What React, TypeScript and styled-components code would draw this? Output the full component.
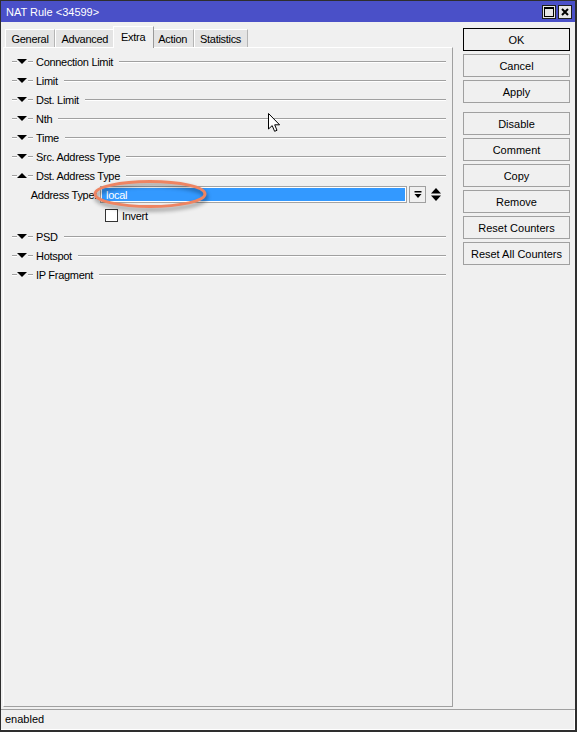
import React from "react";
import styled, { createGlobalStyle } from "styled-components";

const GlobalStyle = createGlobalStyle`
  html, body {
    margin: 0;
    padding: 0;
    background: #f0f0f0;
  }
  body {
    font-family: "Liberation Sans", Arial, sans-serif;
    font-size: 11px;
    color: #000;
  }
`;

const Window = styled.div`
  position: relative;
  width: 577px;
  height: 732px;
  box-sizing: border-box;
  border: 1px solid #2e2e2e;
  border-right-width: 2px;
  border-bottom-width: 2px;
  background: #f0f0f0;
  display: flex;
  flex-direction: column;
  overflow: hidden;
`;

const TitleBar = styled.div`
  height: 21px;
  flex: none;
  background: #4a50c8;
  color: #fff;
  display: flex;
  align-items: center;
  justify-content: space-between;
  padding: 0 3px 0 5px;
  font-size: 11px;
`;

const WinButtons = styled.div`
  display: flex;
  gap: 2px;
`;

const WinButton = styled.div`
  width: 14px;
  height: 14px;
  box-sizing: border-box;
  border: 1px solid #1e1e1e;
  background: #e6e6e6;
  display: flex;
  align-items: center;
  justify-content: center;
`;

const Body = styled.div`
  flex: 1;
  min-height: 0;
  display: flex;
`;

const LeftColumn = styled.div`
  width: 450px;
  margin-left: 2px;
  margin-bottom: 2px;
  display: flex;
  flex-direction: column;
`;

const TabStrip = styled.div`
  height: 25px;
  flex: none;
  display: flex;
  align-items: flex-end;
  padding-left: 2px;
  letter-spacing: -0.3px;
`;

const Tab = styled.div<{ $active?: boolean }>`
  box-sizing: border-box;
  height: ${(p) => (p.$active ? "22px" : "18px")};
  margin: ${(p) => (p.$active ? "0 -2px -1px -2px" : "0")};
  padding: ${(p) => (p.$active ? "0 7.5px 2px" : "0 5.5px")};
  position: relative;
  z-index: ${(p) => (p.$active ? 2 : 1)};
  background: ${(p) => (p.$active ? "#f0f0f0" : "#e4e4e4")};
  border-top: 1px solid #fff;
  border-left: 1px solid #fff;
  border-right: 1px solid ${(p) => (p.$active ? "#9a9a9a" : "#b4b4b4")};
  display: flex;
  align-items: center;
  white-space: nowrap;
`;

const Panel = styled.div`
  flex: 1;
  box-sizing: border-box;
  border-top: 1px solid #fff;
  border-left: 1px solid #fff;
  border-right: 1px solid #a0a0a0;
  border-bottom: 1px solid #a0a0a0;
  padding: 4px 6px 0 7px;
  letter-spacing: -0.3px;
`;

const SectionRow = styled.div`
  height: 19px;
  display: flex;
  align-items: center;
`;

const Dash = styled.div<{ $w: number }>`
  width: ${(p) => p.$w}px;
  height: 0;
  flex: none;
  border-top: 1px solid #a0a0a0;
  border-bottom: 1px solid #fff;
  margin-left: 1px;
`;

const Rule = styled.div`
  flex: 1;
  height: 0;
  border-top: 1px solid #a0a0a0;
  border-bottom: 1px solid #fff;
  margin-left: 6px;
`;

const SectionTitle = styled.span`
  margin-left: 3px;
  white-space: nowrap;
`;

const ArrowSvg = styled.svg`
  flex: none;
`;

const FieldRow = styled.div`
  height: 19px;
  display: flex;
  align-items: center;
`;

const FieldLabel = styled.span`
  width: 86px;
  text-align: right;
  padding-right: 3px;
  white-space: nowrap;
  flex: none;
`;

const SelectBox = styled.div`
  width: 307px;
  height: 17px;
  box-sizing: border-box;
  border: 1px solid #a3a3a3;
  padding: 1px;
  background: #fff;
  flex: none;
`;

const SelectValue = styled.div`
  height: 100%;
  background: #3399ff;
  color: #fff;
  display: flex;
  align-items: center;
  padding-left: 4px;
`;

const DropButton = styled.div`
  width: 17px;
  height: 17px;
  box-sizing: border-box;
  margin-left: 2px;
  border: 1px solid #a0a0a0;
  background: #f0f0f0;
  display: flex;
  align-items: center;
  justify-content: center;
  flex: none;
`;

const Spinner = styled.svg`
  margin-left: 5px;
  flex: none;
`;

const CheckRow = styled.div`
  height: 23px;
  display: flex;
  align-items: center;
  padding-left: 94px;
`;

const CheckBox = styled.div`
  width: 13px;
  height: 13px;
  box-sizing: border-box;
  border: 1px solid #333;
  background: #fff;
  margin-right: 4px;
`;

const RightColumn = styled.div`
  flex: 1;
  padding: 6px 0 0 10px;
  display: flex;
  flex-direction: column;
  gap: 3px;
`;

const Button = styled.div<{ $default?: boolean; $spaced?: boolean }>`
  width: 107px;
  height: 23px;
  box-sizing: border-box;
  border: 1px solid ${(p) => (p.$default ? "#000" : "#a0a0a0")};
  background: #f0f0f0;
  display: flex;
  align-items: center;
  justify-content: center;
  margin-top: ${(p) => (p.$spaced ? "6px" : "0")};
`;

const StatusBar = styled.div`
  height: 21px;
  flex: none;
  box-sizing: border-box;
  border-top: 1px solid #a0a0a0;
  box-shadow: inset -1px -1px 0 #fff;
  padding: 0 0 2px 4px;
  display: flex;
  align-items: center;
`;

const Highlight = styled.svg`
  position: absolute;
  left: 88px;
  top: 173px;
  overflow: visible;
  filter: drop-shadow(1px 3px 2px rgba(0, 0, 0, 0.45));
  pointer-events: none;
`;

const Cursor = styled.svg`
  position: absolute;
  left: 267px;
  top: 112px;
  pointer-events: none;
`;

const tabs = ["General", "Advanced", "Extra", "Action", "Statistics"];
const before = [
  "Connection Limit",
  "Limit",
  "Dst. Limit",
  "Nth",
  "Time",
  "Src. Address Type",
];
const after = ["PSD", "Hotspot", "IP Fragment"];
const buttons = [
  "OK",
  "Cancel",
  "Apply",
  "Disable",
  "Comment",
  "Copy",
  "Remove",
  "Reset Counters",
  "Reset All Counters",
];

const Arrow: React.FC<{ open?: boolean }> = ({ open }) => (
  <ArrowSvg width="10" height="5" viewBox="0 0 10 5">
    <polygon points={open ? "0,5 10,5 5,0" : "0,0 10,0 5,5"} fill="#000" />
  </ArrowSvg>
);

const Section: React.FC<{ title: string; open?: boolean }> = ({
  title,
  open,
}) => (
  <SectionRow>
    <Dash $w={5} />
    <Arrow open={open} />
    <Dash $w={5} />
    <SectionTitle>{title}</SectionTitle>
    <Rule />
  </SectionRow>
);

const App: React.FC = () => {
  return (
    <>
      <GlobalStyle />
      <Window>
        <TitleBar>
          <span>NAT Rule &lt;34599&gt;</span>
          <WinButtons>
            <WinButton>
              <svg width="10" height="10" viewBox="0 0 10 10">
                <rect x="0.5" y="0.5" width="9" height="9" fill="none" stroke="#000" />
                <rect x="0" y="0" width="10" height="2" fill="#000" />
              </svg>
            </WinButton>
            <WinButton>
              <svg width="8" height="8" viewBox="0 0 8 8">
                <path d="M1 1 L7 7 M7 1 L1 7" stroke="#000" strokeWidth="2" />
              </svg>
            </WinButton>
          </WinButtons>
        </TitleBar>
        <Body>
          <LeftColumn>
            <TabStrip>
              {tabs.map((t) => (
                <Tab key={t} $active={t === "Extra"}>
                  {t}
                </Tab>
              ))}
            </TabStrip>
            <Panel>
              {before.map((t) => (
                <Section key={t} title={t} />
              ))}
              <Section title="Dst. Address Type" open />
              <FieldRow>
                <FieldLabel>Address Type:</FieldLabel>
                <SelectBox>
                  <SelectValue>local</SelectValue>
                </SelectBox>
                <DropButton>
                  <svg width="8" height="8" viewBox="0 0 8 8">
                    <rect x="0.5" y="0" width="7" height="1.5" fill="#000" />
                    <polygon points="0.5,3 7.5,3 4,7" fill="#000" />
                  </svg>
                </DropButton>
                <Spinner width="10" height="13" viewBox="0 0 10 13">
                  <polygon points="0,5.5 10,5.5 5,0" fill="#000" />
                  <polygon points="0,7.5 10,7.5 5,13" fill="#000" />
                </Spinner>
              </FieldRow>
              <CheckRow>
                <CheckBox />
                <span>Invert</span>
              </CheckRow>
              {after.map((t) => (
                <Section key={t} title={t} />
              ))}
            </Panel>
          </LeftColumn>
          <RightColumn>
            {buttons.map((b) => (
              <Button key={b} $default={b === "OK"} $spaced={b === "Disable"}>
                {b}
              </Button>
            ))}
          </RightColumn>
        </Body>
        <StatusBar>enabled</StatusBar>
        <Highlight width="124" height="42" viewBox="0 0 124 42">
          <ellipse
            cx="61"
            cy="20"
            rx="55"
            ry="12.5"
            fill="none"
            stroke="#ee8462"
            strokeWidth="3"
          />
        </Highlight>
        <Cursor width="13" height="20" viewBox="0 0 13 20">
          <path
            d="M0.5 0.5 L0.5 16 L4.2 12.6 L6.6 18.3 L9 17.3 L6.7 11.8 L11.6 11.8 Z"
            fill="#fff"
            stroke="#000"
            strokeWidth="1"
          />
        </Cursor>
      </Window>
    </>
  );
};

export default App;
